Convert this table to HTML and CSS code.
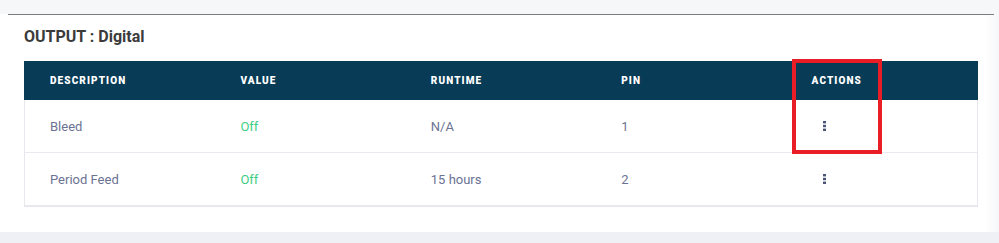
FILE: index.html
```html
<!DOCTYPE html>
<html lang="en">
<head>
<meta charset="utf-8">
<title>OUTPUT : Digital</title>
<link rel="stylesheet" href="styles.css">
</head>
<body>
<div class="top-strip"></div>
<section class="panel">
  <div class="rule"></div>
  <h2 class="title">OUTPUT : Digital</h2>
  <div class="table">
    <div class="row head">
      <div class="cell">DESCRIPTION</div>
      <div class="cell">VALUE</div>
      <div class="cell">RUNTIME</div>
      <div class="cell">PIN</div>
      <div class="cell">ACTIONS</div>
    </div>
    <div class="row">
      <div class="cell">Bleed</div>
      <div class="cell off">Off</div>
      <div class="cell">N/A</div>
      <div class="cell">1</div>
      <div class="cell"><span class="kebab"><svg width="3" height="10" viewBox="0 0 3 10"><rect x="0" y="0" width="3" height="2.4"/><rect x="0" y="3.8" width="3" height="2.4"/><rect x="0" y="7.6" width="3" height="2.4"/></svg></span></div>
    </div>
    <div class="row">
      <div class="cell">Period Feed</div>
      <div class="cell off">Off</div>
      <div class="cell">15 hours</div>
      <div class="cell">2</div>
      <div class="cell"><span class="kebab"><svg width="3" height="10" viewBox="0 0 3 10"><rect x="0" y="0" width="3" height="2.4"/><rect x="0" y="3.8" width="3" height="2.4"/><rect x="0" y="7.6" width="3" height="2.4"/></svg></span></div>
    </div>
    <div class="highlight"></div>
  </div>
</section>
</body>
</html>
```
FILE: styles.css
```css
html, body {
  margin: 0;
  padding: 0;
}
body {
  background: #eff0f5;
  font-family: Roboto, "Liberation Sans", sans-serif;
  width: 999px;
  height: 243px;
  overflow: hidden;
}
.top-strip {
  height: 14px;
  background: #f6f7f9;
}
.panel {
  background: linear-gradient(to right, #ffffff 0, #ffffff 985px, #f6f7f9 999px);
  padding: 0 0 25px 0;
}
.rule {
  height: 1px;
  background: #7d7d7d;
  margin: 0 5px 0 8px;
}
.title {
  margin: 12px 0 15px 24px;
  font-size: 16px;
  line-height: 19px;
  font-weight: 700;
  color: #3b3b3b;
}
.table {
  position: relative;
  margin-left: 24px;
  width: 952px;
  border: 1px solid #e6e8ee;
  border-top: none;
  background: #fff;
}
.row {
  display: grid;
  grid-template-columns: repeat(5, 1fr);
  align-items: center;
  height: 52px;
  border-bottom: 1px solid #e8eaf0;
  font-size: 13px;
  color: #6b7392;
}
.row:last-of-type {
  border-bottom: none;
  height: 51px;
}
.row.head {
  height: 39px;
  background: #073b56;
  border-bottom: none;
  color: #ffffff;
  font-size: 10px;
  font-weight: 900;
  letter-spacing: 1.1px;
  margin: 0 -1px;
  padding: 0 1px;
}
.cell {
  padding-left: 25px;
}
.off {
  color: #3ecf86;
}
.kebab {
  display: inline-flex;
  margin-left: 11px;
  fill: #4b5577;
}
.highlight {
  position: absolute;
  left: 767px;
  top: -2px;
  width: 82px;
  height: 87px;
  border: 4px solid #e81d25;
  pointer-events: none;
}
```
